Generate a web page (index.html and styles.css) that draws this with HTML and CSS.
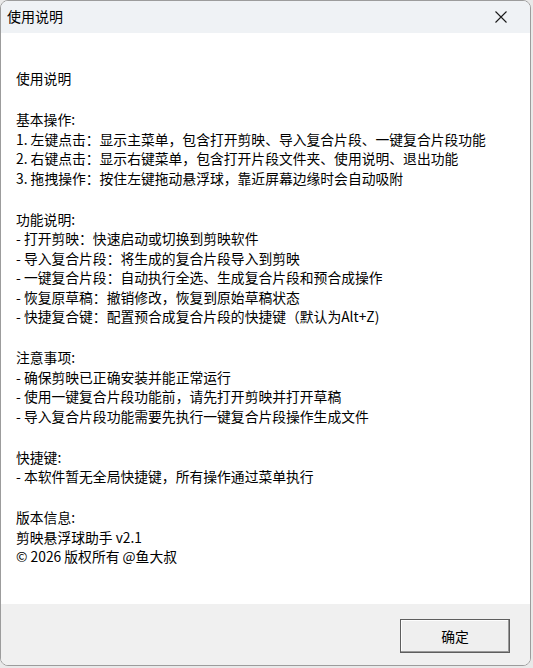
FILE: index.html
```html
<!DOCTYPE html>
<html lang="zh-CN">
<head>
<meta charset="utf-8">
<title>使用说明</title>
<link rel="stylesheet" href="styles.css">
</head>
<body>
<div class="window">
  <div class="titlebar">
    <span class="title">使用说明</span>
    <span class="close" aria-label="关闭">
      <svg width="12" height="12" viewBox="0 0 12 12"><path d="M0.5 0.5 L11.5 11.5 M11.5 0.5 L0.5 11.5" stroke="#1a1a1a" stroke-width="1.1" fill="none"/></svg>
    </span>
  </div>
  <div class="content">
    <div class="section">
      <div class="line">使用说明</div>
    </div>
    <div class="section">
      <div class="line">基本操作:</div>
      <div class="line">1. 左键点击：显示主菜单，包含打开剪映、导入复合片段、一键复合片段功能</div>
      <div class="line">2. 右键点击：显示右键菜单，包含打开片段文件夹、使用说明、退出功能</div>
      <div class="line">3. 拖拽操作：按住左键拖动悬浮球，靠近屏幕边缘时会自动吸附</div>
    </div>
    <div class="section">
      <div class="line">功能说明:</div>
      <div class="line">- 打开剪映：快速启动或切换到剪映软件</div>
      <div class="line">- 导入复合片段：将生成的复合片段导入到剪映</div>
      <div class="line">- 一键复合片段：自动执行全选、生成复合片段和预合成操作</div>
      <div class="line">- 恢复原草稿：撤销修改，恢复到原始草稿状态</div>
      <div class="line">- 快捷复合键：配置预合成复合片段的快捷键（默认为Alt+Z)</div>
    </div>
    <div class="section">
      <div class="line">注意事项:</div>
      <div class="line">- 确保剪映已正确安装并能正常运行</div>
      <div class="line">- 使用一键复合片段功能前，请先打开剪映并打开草稿</div>
      <div class="line">- 导入复合片段功能需要先执行一键复合片段操作生成文件</div>
    </div>
    <div class="section">
      <div class="line">快捷键:</div>
      <div class="line">- 本软件暂无全局快捷键，所有操作通过菜单执行</div>
    </div>
    <div class="section">
      <div class="line">版本信息:</div>
      <div class="line">剪映悬浮球助手 v2.1</div>
      <div class="line">© 2026 版权所有 @鱼大叔</div>
    </div>
  </div>
  <div class="footer">
    <button class="ok">确定</button>
  </div>
</div>
</body>
</html>
```

FILE: styles.css
```css
html, body {
  margin: 0;
  padding: 0;
}
body {
  background: #e9e9e9;
  width: 533px;
  height: 668px;
  overflow: hidden;
  font-family: "Noto Sans CJK SC", "Noto Sans", sans-serif;
  color: #000;
}
.window {
  box-sizing: border-box;
  width: 531px;
  height: 666px;
  border: 1px solid #9c9c9c;
  border-radius: 8px;
  overflow: hidden;
  display: flex;
  flex-direction: column;
  background: #fff;
}
.titlebar {
  height: 32px;
  flex: none;
  background: #eff2f5;
  display: flex;
  align-items: center;
  justify-content: space-between;
  padding: 0 23px 0 6px;
}
.title {
  font-size: 14px;
  line-height: 20px;
  margin-top: -2px;
}
.close {
  display: flex;
  width: 12px;
  height: 12px;
}
.content {
  flex: 1;
  background: #fff;
  padding: 36px 15px 0;
  font-size: 13.8px;
  line-height: 19.5px;
}
.section + .section {
  margin-top: 21.5px;
}
.line {
  white-space: nowrap;
}
.footer {
  height: 61px;
  flex: none;
  background: #f0f0f0;
  display: flex;
  justify-content: flex-end;
  align-items: flex-start;
  padding: 15px 20px 0 0;
  box-sizing: border-box;
}
.ok {
  width: 110px;
  height: 34px;
  box-sizing: border-box;
  background: #efefef;
  border: 1px solid #5e5e5e;
  box-shadow: inset -1px -1px 0 #9a9a9a, inset 1px 1px 0 #fdfdfd;
  font-family: "Noto Sans CJK SC", sans-serif;
  font-size: 13.8px;
  color: #000;
  padding: 0;
  margin: 0;
}
```
